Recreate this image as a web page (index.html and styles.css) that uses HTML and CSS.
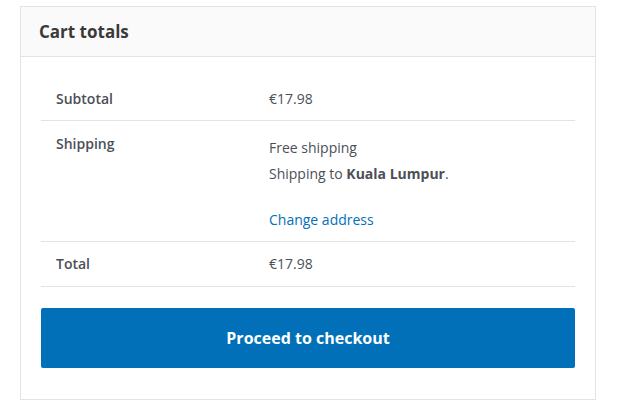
FILE: index.html
```
<!DOCTYPE html>
<html lang="en">
<head>
    <meta charset="UTF-8">
    <meta name="viewport" content="width=device-width, initial-scale=1.0">
    <title>Cart totals</title>
    <link rel="stylesheet" href="styles.css">
</head>
<body>
<div class="page">
    <div class="cart-totals">
        <h2>Cart totals</h2>
        <div class="totals-body">
            <table class="totals">
                <tr class="subtotal">
                    <th>Subtotal</th>
                    <td>€17.98</td>
                </tr>
                <tr class="shipping">
                    <th>Shipping</th>
                    <td>
                        <p class="method">Free shipping</p>
                        <p class="destination">Shipping to <strong>Kuala Lumpur</strong>.</p>
                        <a href="#" class="change">Change address</a>
                    </td>
                </tr>
                <tr>
                    <th>Total</th>
                    <td>€17.98</td>
                </tr>
            </table>
            <a href="#" class="checkout">Proceed to checkout</a>
        </div>
    </div>
</div>
</body>
</html>
```

FILE: styles.css
```
body {
    margin: 0;
    font-family: "Open Sans", sans-serif;
    font-size: 14px;
    color: #4b4f58;
    background: #fff;
}

.page {
    padding: 6px 26px 0 20px;
}

.cart-totals {
    border: 1px solid #e3e3e3;
    height: 394px;
    box-sizing: border-box;
}

.cart-totals h2 {
    margin: 0;
    padding: 0 18px;
    height: 49px;
    line-height: 49px;
    font-size: 17px;
    font-weight: 700;
    color: #3a3a3a;
    background: #fafafa;
    border-bottom: 1px solid #e3e3e3;
}

.totals-body {
    padding: 20px 20px 0;
}

.totals {
    width: 100%;
    border-collapse: collapse;
}

.totals th,
.totals td {
    padding: 12px 15px;
    line-height: 20px;
    text-align: left;
    vertical-align: top;
    border-bottom: 1px solid #e3e3e3;
}

.subtotal th,
.subtotal td {
    padding-bottom: 11px;
}

.totals th {
    width: 183px;
    font-weight: 600;
    color: #4b4f58;
}

.totals td {
    color: #4b4f58;
}

.shipping th {
    padding-top: 13px;
}

.shipping td {
    padding-top: 17px;
    padding-bottom: 11px;
}

.shipping p {
    margin: 0 0 6px;
}

.shipping .destination {
    margin-bottom: 26px;
}

.shipping strong {
    font-weight: 700;
}

.change {
    color: #0170b9;
    text-decoration: none;
}

.checkout {
    display: block;
    margin-top: 21px;
    height: 60px;
    line-height: 60px;
    text-align: center;
    background: #0170b9;
    color: #fff;
    font-size: 16px;
    font-weight: 700;
    text-decoration: none;
    border-radius: 2px;
}
```
